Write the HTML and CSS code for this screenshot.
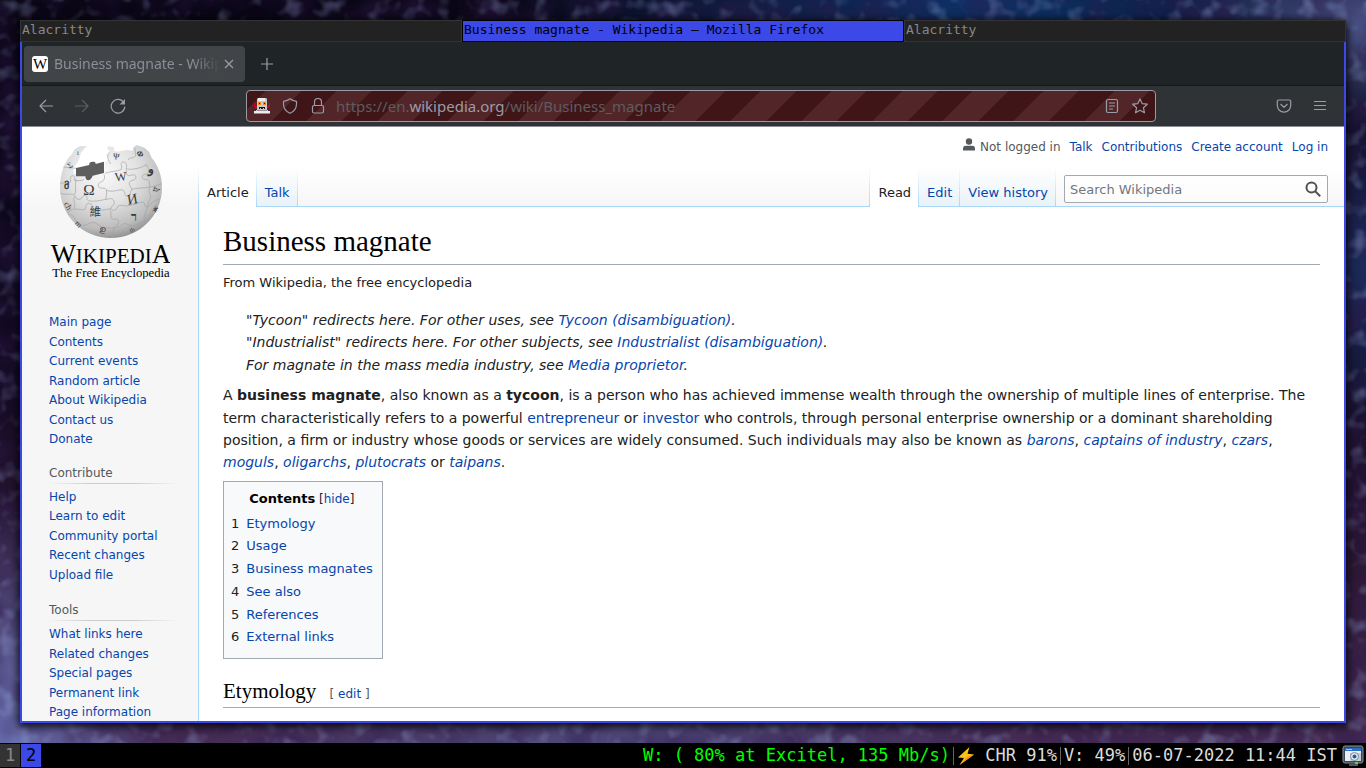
FILE: index.html
```html
<!DOCTYPE html>
<html lang="en">
<head>
<meta charset="utf-8">
<title>Business magnate - Wikipedia</title>
<link rel="stylesheet" href="styles.css">
</head>
<body>
<div class="desktop">
  <svg class="stars" aria-hidden="true">
    <filter id="haze" x="0" y="0" width="100%" height="100%">
      <feTurbulence type="fractalNoise" baseFrequency="0.06" numOctaves="2" seed="8"/>
      <feColorMatrix values="0 0 0 0 .38  0 0 0 0 .5  0 0 0 0 .85  3 0 0 0 -1.500"/>
    </filter>
    <filter id="dust" x="0" y="0" width="100%" height="100%">
      <feTurbulence type="fractalNoise" baseFrequency="0.03" numOctaves="2" seed="3"/>
      <feColorMatrix values="0 0 0 0 .03  0 0 0 0 .01  0 0 0 0 .07  0 2 0 0 -.7"/>
    </filter>
    <rect width="100%" height="100%" filter="url(#dust)" opacity=".5"/>
    <rect width="100%" height="100%" filter="url(#haze)" opacity=".3"/>
  </svg>
  <div class="frame">
    <div class="titles">
      <div class="title">Alacritty</div>
      <div class="title title-active">Business magnate - Wikipedia — Mozilla Firefox</div>
      <div class="title">Alacritty</div>
    </div>
    <div class="browser">
      <div class="tabbar">
        <div class="tab">
          <span class="favicon">W</span>
          <span class="tab-label">Business magnate - Wikipedia</span>
          <button class="tab-close" aria-label="Close tab"><svg width="10" height="10" viewBox="0 0 10 10"><path d="M1 1l8 8M9 1L1 9"/></svg></button>
        </div>
        <button class="tool" aria-label="New tab"><svg width="14" height="14" viewBox="0 0 14 14"><path d="M7 1v12M1 7h12"/></svg></button>
      </div>
      <div class="toolbar">
        <button class="tool" aria-label="Back"><svg width="16" height="16" viewBox="0 0 16 16"><path d="M15 8H2M8 2L2 8l6 6"/></svg></button>
        <button class="tool tool-off" aria-label="Forward" disabled><svg width="16" height="16" viewBox="0 0 16 16"><path d="M1 8h13M8 2l6 6-6 6"/></svg></button>
        <button class="tool" aria-label="Reload"><svg width="16" height="16" viewBox="0 0 16 16"><path d="M13.6 4.4A6.8 6.8 0 1 0 14.8 8.6"/><path class="solid" d="M15 1v5.500H9.500z"/></svg></button>
        <div class="urlbar">
          <svg width="16" height="16" viewBox="0 0 16 16" aria-hidden="true">
            <path fill="#d70022" d="M0 5h1v3h2v2H1V9H0zM16 5h-1v3h-2v2h2V9h1z"/>
            <path fill="#c9c9cd" d="M4 0h8l1 1v11H3V1zM2 12h12v1H2z"/>
            <path fill="#ededf0" d="M4 0h7v3H4zM0 13h16v2H0z"/>
            <path fill="#8f8f94" d="M3 12h10v1H3zM0 15h16v1H0z"/>
            <path fill="#f28a1a" d="M4 4h3v3H4zM9 4h3v3H9z"/>
            <path fill="#2a0d08" d="M5 5h1v1H5zM10 5h1v1h-1zM5 9h6v2h-1v-1H9v1H7v-1H6v1H5z"/>
          </svg>
          <svg class="icon" width="16" height="16" viewBox="0 0 16 16" aria-hidden="true"><path d="M8 .8C10 2.500 12 3 14.500 3.400V6C14.500 10.500 12 13.500 8 15.300 4 13.500 1.500 10.500 1.500 6V3.400C4 3 6 2.500 8 .8z"/></svg>
          <svg class="icon" width="16" height="16" viewBox="0 0 16 16" aria-hidden="true"><rect x="2.500" y="7.500" width="11" height="7.500" rx="1.500"/><path d="M4.500 7V4a3.500 3.500 0 0 1 7 0v3"/></svg>
          <span class="url">https://en.<b>wikipedia.org</b>/wiki/Business_magnate</span>
          <button class="mini" aria-label="Reader view"><svg width="16" height="16" viewBox="0 0 16 16"><rect x="2.500" y="1.500" width="11" height="13" rx="1.500"/><path d="M5 5h6M5 8h6M5 11h4"/></svg></button>
          <button class="mini" aria-label="Bookmark"><svg width="16" height="16" viewBox="0 0 16 16"><path d="M8 .9l2.100 4.700 5.200.6-3.900 3.500 1.100 5.100L8 12.200l-4.500 2.600 1.100-5.100L.7 6.200l5.200-.6z"/></svg></button>
        </div>
        <button class="tool" aria-label="Save to Pocket"><svg width="16" height="16" viewBox="0 0 16 16"><path d="M2.500 2h11a1.200 1.200 0 0 1 1.200 1.200V7.500a6.700 6.700 0 0 1-13.400 0V3.200A1.200 1.200 0 0 1 2.500 2zM4.500 6L8 9.300 11.500 6"/></svg></button>
        <button class="tool" aria-label="Menu"><svg width="16" height="16" viewBox="0 0 16 16"><path d="M2 3.500h12M2 7.500h12M2 11.500h12"/></svg></button>
      </div>
      <div class="wiki">
        <aside class="side">
          <a class="logo" href="#" aria-label="Main page">
            <svg width="120" height="137" viewBox="90 36 360 411">
              <defs>
                <radialGradient id="ball" cx=".42" cy=".3" r=".75">
                  <stop offset="0" stop-color="#fafafa"/><stop offset=".45" stop-color="#e2e2e2"/><stop offset=".8" stop-color="#bcbcbc"/><stop offset="1" stop-color="#858585"/>
                </radialGradient>
              </defs>
              <path fill="url(#ball)" d="M200 48l-20 0-16 10-8 14C132 94 120 132 120 172c0 86 68 152 153 152s153-66 153-152c0-36-12-66-31-89l-8-18-14-12-24-8-10 8 0 9-20-2-28 5-8-2-2-12-17-2-3 7 7 7-4 9-6 4 8 12-12 8-2 30-40 6-3 6 7 3-2 9-16 1-4-9 5-5-38-6-1-18 9-10 5-8 5-11 3-14z"/>
              <path d="M168 114l40-9c-2-6 2-10 11-10 8 0 9 5 7 7l26-7 0 34-34 8c-6 18-22 18-22 2l-28 0z" fill="#5e5e5e"/>
              <g fill="none" stroke="#a2a2a2" stroke-width="2">
                <path d="M130 111l38 4M121 160c12-4 20 6 30-4 4-6-4-12 3-18 10-4 14 8 8 12 12 4 24 2 30-2"/>
                <path d="M252 133c4 12 0 18-7 22-10 2-14 12-6 18 10 4 18-2 20 8 3 10-2 20-1 28"/>
                <path d="M121 189c18 10 32-4 44 10 7 14 18 10 22 2 4-8 16-6 14 4-4 14 40 8 58 2"/>
                <path d="M168 148c-4 18 2 30-4 46M164 200c-8 14 6 20-2 34-5 10-14 2-17 12-2 12 14 6 16 16l18 26"/>
                <path d="M259 209c12-6 22-4 24 8 2 10-10 8-10 18 2 12 18 4 20-4 4-12 22 2 40-6"/>
                <path d="M162 238c16-2 20 2 30 2 10-8 2-16 12-20 12-2 14 10 8 16 10 8 44 4 60 0"/>
                <path d="M270 239c6 14 0 20 4 26 10 6 18-2 22 8 2 14-16 14-14 24l-6 26"/>
                <path d="M256 130c18-8 34-4 48-12 4-10-6-18 4-22 12-2 14 12 10 20 18 6 50-4 62-12"/>
                <path d="M318 119c4 12-2 14 8 18 12-2 20-6 22 4 0 12-16 8-20 16-2 12 10 16 8 24"/>
                <path d="M258 181c26 8 40-6 52 0 8 10 2 18 12 18 14-4 6-18 16-22 20-4 56-2 87-16"/>
                <path d="M380 104c4 16 12 14 4 26-8 6-16 0-18 10 4 14 18 4 22 14l2 20M333 225c18 0 22-10 36-8 10 4 2 14 12 14 12-4 8-16 38-24"/>
                <path d="M388 174c-4 16 8 20 2 34-8 10-4 16-8 28-12 20-6 28-12 52M182 288c24-2 28-14 42-10 14 6 18 18 54 16 28 0 28-18 42-12 14 6 20 8 52-8"/>
                <path d="M268 68c-10 10-2 24 4 34M345 54l2 24c-12 10-20 2-22 12"/>
              </g>
              <g fill="#3a3a3a" font-family="Liberation Serif, serif" text-anchor="middle">
                <text x="207" y="194" font-size="46">Ω</text>
                <text x="302" y="153" font-size="38" transform="rotate(-6 302 140)">W</text>
                <text x="337" y="222" font-size="44" transform="rotate(-10 337 208)">И</text>
                <text x="226" y="259" font-size="34" font-family="Noto Sans CJK TC, sans-serif">維</text>
                <text x="342" y="274" font-size="36" font-weight="bold">ר</text>
                <text x="288" y="88" font-size="26" transform="rotate(10 288 80)">Ψ</text>
                <text x="150" y="114" font-size="24" transform="rotate(-30 150 106)">Σ</text>
                <text x="138" y="176" font-size="30" font-weight="bold">მ</text>
                <text x="144" y="236" font-size="26" transform="rotate(60 144 228)">ch</text>
                <text x="174" y="76" font-size="20">i</text>
                <text x="360" y="80" font-size="24" font-weight="bold" transform="rotate(30 360 72)">Ф</text>
                <text x="392" y="130" font-size="36" font-weight="bold">و</text>
                <text x="410" y="186" font-size="26" transform="rotate(-70 410 178)">ए</text>
                <text x="403" y="245" font-size="24" font-weight="bold" transform="rotate(-60 403 236)">ж</text>
                <text x="246" y="306" font-size="26" transform="rotate(12 246 300)">ഉ</text>
                <text x="176" y="290" font-size="24" transform="rotate(45 176 282)">m</text>
                <text x="336" y="306" font-size="18" transform="rotate(-24 336 300)">th</text>
              </g>
              <g fill="#000" font-family="Liberation Serif, serif">
                <text x="92" y="399" font-size="80">W<tspan font-size="63">IKIPEDI</tspan>A</text>
                <text x="97" y="441" font-size="38">The Free Encyclopedia</text>
              </g>
            </svg>
          </a>
          <nav class="portal portal-first">
            <ul>
              <li><a href="#">Main page</a></li>
              <li><a href="#">Contents</a></li>
              <li><a href="#">Current events</a></li>
              <li><a href="#">Random article</a></li>
              <li><a href="#">About Wikipedia</a></li>
              <li><a href="#">Contact us</a></li>
              <li><a href="#">Donate</a></li>
            </ul>
          </nav>
          <nav class="portal">
            <h3>Contribute</h3>
            <ul>
              <li><a href="#">Help</a></li>
              <li><a href="#">Learn to edit</a></li>
              <li><a href="#">Community portal</a></li>
              <li><a href="#">Recent changes</a></li>
              <li><a href="#">Upload file</a></li>
            </ul>
          </nav>
          <nav class="portal">
            <h3>Tools</h3>
            <ul>
              <li><a href="#">What links here</a></li>
              <li><a href="#">Related changes</a></li>
              <li><a href="#">Special pages</a></li>
              <li><a href="#">Permanent link</a></li>
              <li><a href="#">Page information</a></li>
            </ul>
          </nav>
        </aside>
        <div class="main">
          <header>
            <ul class="personal">
              <li class="anon"><svg width="14" height="14" viewBox="0 0 14 14" aria-hidden="true"><circle cx="7" cy="3.500" r="3.200"/><path d="M1 12.500V10.500c0-2 1.500-2.700 3-2.700h6c1.500 0 3 .7 3 2.700v2z"/></svg>Not logged in</li>
              <li><a href="#">Talk</a></li>
              <li><a href="#">Contributions</a></li>
              <li><a href="#">Create account</a></li>
              <li><a href="#">Log in</a></li>
            </ul>
            <div class="views">
              <nav class="tabs">
                <a class="selected" href="#">Article</a>
                <a href="#">Talk</a>
              </nav>
              <nav class="tabs tabs-right">
                <a class="selected" href="#">Read</a>
                <a href="#">Edit</a>
                <a href="#">View history</a>
              </nav>
              <form class="search">
                <input type="search" aria-label="Search Wikipedia" placeholder="Search Wikipedia">
                <button type="button" aria-label="Search"><svg width="16" height="16" viewBox="0 0 16 16"><circle cx="6.500" cy="6.500" r="5"/><path d="M10.200 10.200l5 5"/></svg></button>
              </form>
            </div>
          </header>
          <main class="content">
            <h1>Business magnate</h1>
            <p class="sub">From Wikipedia, the free encyclopedia</p>
            <div class="hatnotes">
              <div>"Tycoon" redirects here. For other uses, see <a href="#">Tycoon (disambiguation)</a>.</div>
              <div>"Industrialist" redirects here. For other subjects, see <a href="#">Industrialist (disambiguation)</a>.</div>
              <div>For magnate in the mass media industry, see <a href="#">Media proprietor</a>.</div>
            </div>
            <p class="lead">A <b>business magnate</b>, also known as a <b>tycoon</b>, is a person who has achieved immense wealth through the ownership of multiple lines of enterprise. The term characteristically refers to a powerful <a href="#">entrepreneur</a> or <a href="#">investor</a> who controls, through personal enterprise ownership or a dominant shareholding position, a firm or industry whose goods or services are widely consumed. Such individuals may also be known as <i><a href="#">barons</a></i>, <i><a href="#">captains of industry</a></i>, <i><a href="#">czars</a></i>, <i><a href="#">moguls</a></i>, <i><a href="#">oligarchs</a></i>, <i><a href="#">plutocrats</a></i> or <i><a href="#">taipans</a></i>.</p>
            <div class="toc">
              <div class="toc-title"><b>Contents</b> [<a href="#">hide</a>]</div>
              <ul>
                <li><span>1</span><a href="#">Etymology</a></li>
                <li><span>2</span><a href="#">Usage</a></li>
                <li><span>3</span><a href="#">Business magnates</a></li>
                <li><span>4</span><a href="#">See also</a></li>
                <li><span>5</span><a href="#">References</a></li>
                <li><span>6</span><a href="#">External links</a></li>
              </ul>
            </div>
            <h2>Etymology <span class="edit">[ <a href="#">edit</a> ]</span></h2>
          </main>
        </div>
      </div>
    </div>
  </div>
</div>
<footer class="statusbar">
  <button class="ws">1</button>
  <button class="ws ws-active">2</button>
  <div class="status">
    <span class="net">W: ( 80% at Excitel, 135 Mb/s)</span>
    <span class="cell"><svg width="18" height="18" viewBox="0 0 18 18" aria-hidden="true"><path fill="#fcc21b" d="M12.500 0L1 10.500l6 .5-4.500 7L17 7.500l-6.500-.8z"/><path fill="#f79329" d="M17 7.500L2.500 18l8-8.500z"/></svg> CHR 91%</span>
    <span class="cell">V: 49%</span>
    <span class="cell">06-07-2022 11:44 IST</span>
    <svg class="tray" width="22" height="22" viewBox="0 0 22 22" aria-hidden="true"><rect x="1" y="1" width="20" height="17" rx="2" fill="#3d4650" stroke="#8492a0"/><path fill="#e8eef4" d="M3 3h16v13H3z"/><path fill="#2b6fc6" d="M3 3h16v3H3z"/><path fill="#9cc8f4" d="M4 4h6v1H4z"/><path fill="#c3ced8" d="M8 8h11v8H8z"/><circle cx="12.500" cy="11.500" r="4" fill="#e6edf2" stroke="#7c8a98"/><circle cx="12.500" cy="11.500" r="2" fill="#2b5c96"/><path fill="#4f5963" d="M7 19h9v2H7z"/><path fill="#6ad02c" d="M13 17h3v2h-3z"/></svg>
  </div>
</footer>
</body>
</html>
```

FILE: styles.css
```css
* { box-sizing: border-box; }
body {
  margin: 0;
  height: 100vh;
  display: flex;
  flex-direction: column;
  overflow: hidden;
  background: #000;
  font-family: "DejaVu Sans", sans-serif;
  color: #202122;
}
ul { list-style: none; margin: 0; padding: 0; }
button { border: 0; padding: 0; background: none; font: inherit; color: inherit; }
a { color: #0645ad; text-decoration: none; }

/* Desktop */
.desktop {
  position: relative;
  flex: 1;
  min-height: 0;
  display: flex;
  padding: 20px;
  background:
    radial-gradient(ellipse 14% 14% at 100% 3%, #4c5488, transparent),
    radial-gradient(ellipse 36% 28% at 72% 0, #0e3268, transparent),
    radial-gradient(ellipse 10% 25% at 100% 36%, #1b2c5c, transparent),
    radial-gradient(ellipse 12% 34% at 0 100%, #6a72b4, transparent),
    radial-gradient(ellipse 30% 20% at 45% 100%, #4f4b7c, transparent),
    linear-gradient(#0a0616 0, #120a22 50%, #2b1634 75%, #452c54 100%);
}
.stars { position: absolute; inset: 0; width: 100%; height: 100%; }
.frame {
  position: relative;
  flex: 1;
  min-width: 0;
  display: flex;
  flex-direction: column;
  box-shadow: 0 2px 8px 2px rgba(0, 0, 0, .8);
}
.titles { display: flex; background: #000; }
.title {
  flex: 1;
  height: 22px;
  padding: 0 1px;
  border: 1px solid #333;
  background: #222;
  color: #888;
  font: 13px/18px "DejaVu Sans Mono", monospace;
  white-space: nowrap;
  overflow: hidden;
}
.title-active { background: #3c49e6; border-color: #000; color: #000; }
.browser {
  flex: 1;
  min-height: 0;
  display: flex;
  flex-direction: column;
  border: 2px solid #3c49e6;
  border-top: 0;
}

/* Browser chrome */
.tabbar {
  display: flex;
  align-items: center;
  gap: 4px;
  height: 44px;
  padding: 0 2px;
  background: #1f2426;
  border-bottom: 1px solid #15191a;
  color: #8b8e98;
}
.tab {
  display: flex;
  align-items: center;
  width: 221px;
  height: 36px;
  padding: 0 8px;
  border-radius: 4px;
  background: #424548;
}
.favicon {
  width: 16px;
  height: 16px;
  margin-right: 6px;
  border-radius: 3px;
  background: #fff;
  color: #000;
  font: 15px/16px "Liberation Serif", serif;
  display: flex;
  justify-content: center;
}
.tab-label {
  flex: 1;
  overflow: hidden;
  white-space: nowrap;
  font: 14px/20px "Noto Sans", sans-serif;
  -webkit-mask-image: linear-gradient(to left, transparent, #000 28px);
  mask-image: linear-gradient(to left, transparent, #000 28px);
}
.tab-close { width: 16px; height: 16px; display: grid; place-items: center; }
.tab-close svg, .tool svg, .mini svg, .icon {
  fill: none;
  stroke: #9a9ca6;
  stroke-width: 1.2;
  stroke-linejoin: round;
}
.tool { width: 36px; height: 36px; display: grid; place-items: center; }
.tool-off { opacity: .4; }
.tool .solid { fill: #9a9ca6; stroke: none; }
.toolbar {
  display: flex;
  align-items: center;
  height: 41px;
  padding: 0 6px;
  background: #2f3335;
  border-bottom: 1px solid #8b8d94;
}
.urlbar {
  flex: 1;
  display: flex;
  align-items: center;
  height: 32px;
  margin: 0 110px;
  padding: 0 7px;
  gap: 12px;
  border: 1px solid #999aa4;
  border-radius: 4px;
  background: repeating-linear-gradient(-45deg, #3f1518 0 25px, #522528 25px 50px);
}
.url { flex: 1; margin-left: -2px; font: 15px/20px "Noto Sans", sans-serif; color: #5d5c61; }
.url b { font-weight: 400; color: #9a9ca6; }
.mini { width: 16px; height: 16px; }
.mini svg { display: block; }

/* Page */
.wiki {
  flex: 1;
  min-height: 0;
  display: flex;
  overflow: hidden;
  background: #f6f6f6 linear-gradient(#fff 50%, #f6f6f6) 0 0 / 100% 80px no-repeat;
}
.side { width: 176px; flex-shrink: 0; }
.logo { display: block; padding: 15px 0 0 28px; height: 186px; }
.portal { padding: 0 22px 0 27px; margin-bottom: 17px; font-size: 12px; }
.portal-first { margin-bottom: 15px; }
.portal h3 {
  margin: 0 0 4px;
  padding-bottom: 2px;
  font-size: 12px;
  line-height: 16px;
  font-weight: 400;
  color: #54595d;
  border-bottom: 1px solid;
  border-image: linear-gradient(to right, #f6f6f6, #c8ccd1 33%, #c8ccd1 66%, #f6f6f6) 1;
}
.portal li { line-height: 1.625; }
.main { flex: 1; min-width: 0; display: flex; flex-direction: column; }
.personal {
  display: flex;
  justify-content: flex-end;
  gap: 9px;
  height: 40px;
  padding: 11px 16px 0 0;
  font-size: 12px;
  line-height: 18px;
}
.anon { display: flex; gap: 4px; color: #54595d; }
.anon svg { fill: #54595d; }
.views {
  display: flex;
  height: 40px;
  padding-right: 16px;
  background: linear-gradient(#a7d7f9, #a7d7f9) 0 100% / 100% 1px no-repeat;
}
.tabs {
  display: flex;
  padding-left: 1px;
  background: linear-gradient(#fff, #a7d7f9) 0 0 / 1px 100% no-repeat;
}
.tabs-right { margin-left: auto; }
.tabs a {
  padding: 16px 8px 0;
  font-size: 13px;
  line-height: 20px;
  background:
    linear-gradient(#fff, #a7d7f9) 100% 0 / 1px 100% no-repeat,
    linear-gradient(#a7d7f9, #a7d7f9) 0 100% / 100% 1px no-repeat,
    linear-gradient(#fff, #e8f2f8);
}
.tabs .selected {
  color: #202122;
  background: linear-gradient(#fff, #a7d7f9) 100% 0 / 1px 100% no-repeat, #fff;
}
.search {
  display: flex;
  width: 264px;
  height: 28px;
  margin: 8px 0 0 8px;
  border: 1px solid #a2a9b1;
  border-radius: 2px;
  background: rgba(255, 255, 255, .6);
}
.search input {
  flex: 1;
  min-width: 0;
  border: 0;
  padding: 0 5px;
  background: none;
  font: 13px "DejaVu Sans", sans-serif;
  color: #202122;
}
.search input::placeholder { color: #72777d; }
.search button { width: 28px; display: grid; place-items: center; }
.search svg { fill: none; stroke: #505254; stroke-width: 2; }
.content {
  flex: 1;
  padding: 20px 24px 0;
  border-left: 1px solid #a7d7f9;
  background: #fff;
  font-size: 14px;
  line-height: 1.6;
}
h1, h2 {
  margin: 0;
  font-family: "Liberation Serif", serif;
  font-weight: 400;
  color: #000;
  border-bottom: 1px solid #a2a9b1;
}
h1 { font-size: 29px; line-height: 28px; padding-bottom: 9px; }
.sub { margin: 8px 0 0; font-size: 13px; line-height: 20px; }
.hatnotes { margin: 16px 0 8px; padding-left: 23px; font-style: italic; }
.lead { margin: 0 0 7px; }
.toc {
  width: max-content;
  padding: 7px 9px 7px 7px;
  border: 1px solid #a2a9b1;
  background: #f8f9fa;
  font-size: 13px;
}
.toc-title { text-align: center; font-size: 12px; line-height: 20px; }
.toc-title b { color: #000; font-size: 13px; }
.toc ul { margin: 4px 0 2px; }
.toc li { display: flex; gap: 7px; line-height: 1.75; }
h2 { margin-top: 17px; font-size: 21px; line-height: 30px; padding-bottom: 1px; }
.edit { margin-left: 8px; font: 12px "DejaVu Sans", sans-serif; color: #54595d; }

/* Status bar */
.statusbar {
  display: flex;
  align-items: center;
  gap: 1px;
  height: 25px;
  background: #000;
  color: #dcdcdc;
  font: 17px/23px "DejaVu Sans Mono", monospace;
}
.ws { width: 20px; height: 23px; background: #333; color: #888; }
.ws-active { background: #3c49e6; color: #000; }
.status { flex: 1; display: flex; justify-content: flex-end; align-items: center; white-space: pre; padding-right: 2px; }
.net { color: #0f0; }
.cell { display: flex; align-items: center; margin-left: 3px; padding-left: 3px; height: 18px; border-left: 1px solid #666; }
.tray { margin-left: 5px; }
```
